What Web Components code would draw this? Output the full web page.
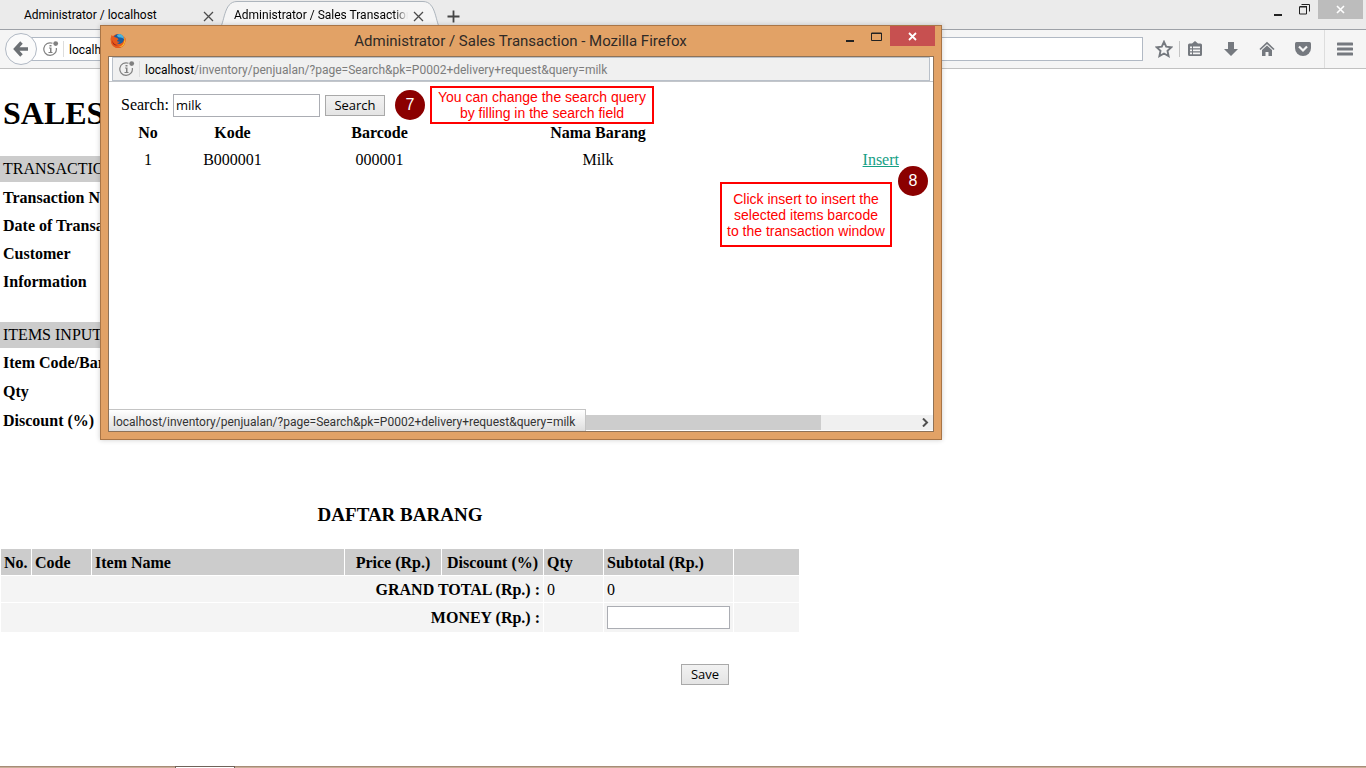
<!DOCTYPE html>
<html lang="en">
<head>
<meta charset="utf-8">
<title>Administrator / Sales Transaction</title>
<style>
  html, body { margin: 0; height: 100%; }
  body { font-family: "Liberation Serif", serif; font-size: 16px; color: #000; background: #fff; overflow: hidden; }
</style>
</head>
<body>
<app-desktop></app-desktop>

<script>
const UI = '"Open Sans", "Noto Sans", sans-serif';
const BAR = 'Roboto, "Open Sans", sans-serif';

function define(name, html, setup) {
  const template = document.createElement('template');
  template.innerHTML = html;
  customElements.define(name, class extends HTMLElement {
    constructor() {
      super();
      this.attachShadow({ mode: 'open' }).append(template.content.cloneNode(true));
    }
    connectedCallback() { if (setup) setup(this); }
  });
}

/* Page identity icon: a ringed "i" with a notification dot */
define('site-info', `
<style>
  :host { display: block; flex: none; width: 16px; height: 18px; }
  svg { display: block; }
</style>
<svg width="16" height="18" viewBox="0 0 16 18" fill="none" aria-hidden="true">
  <path d="M9.500 3.300A6.300 6.300 0 1 0 13.300 8" stroke="#808080" stroke-width="1.200"/>
  <path d="M6 8h1.500V12.500M5.500 12.500h4M8 7.500v5" stroke="#808080"/>
  <path d="M6.500 5h2v1.500h-2z" fill="#808080"/>
  <circle cx="12.700" cy="3.600" r="2.400" fill="#808080"/>
</svg>`);

define('browser-tab', `
<style>
  :host { display: block; position: relative; flex: none; width: 210px; height: 30px; font: 12px/30px ${BAR}; }
  .shape { display: none; position: absolute; left: -1px; top: 0; }
  :host([active]) .shape { display: block; }
  .row { position: relative; display: flex; align-items: center; height: 100%; padding: 0 5px 0 14px; gap: 4px; }
  .name { flex: 1; min-width: 0; overflow: hidden; white-space: nowrap; line-height: 32px; }
  :host([active]) .name { -webkit-mask-image: linear-gradient(90deg, #000 92%, transparent 100%); mask-image: linear-gradient(90deg, #000 92%, transparent 100%); }
  button { flex: none; width: 13px; height: 16px; margin: 2px 0 0; padding: 0; border: 0; background: none; display: grid; place-items: center; }
</style>
<svg class="shape" width="222" height="30" viewBox="0 0 222 30" aria-hidden="true">
  <path d="M0 29.500C6 24 4 1.500 18 1.500H204C218 1.500 216 24 222 29.500V30H0Z" fill="#f5f5f5"/>
  <path d="M0 29.500C6 24 4 1.500 18 1.500H204C218 1.500 216 24 222 29.500" fill="none" stroke="#adb5bd"/>
</svg>
<div class="row">
  <span class="name"><slot></slot></span>
  <button aria-label="Close tab"><svg width="11" height="11" viewBox="0 0 11 11"><path d="M1 1l9 9M10 1l-9 9" stroke="#4c4c4c" stroke-width="1.300"/></svg></button>
</div>`);

define('browser-chrome', `
<style>
  :host { display: block; flex: none; font: 12px/16px ${BAR}; }
  button { border: 0; padding: 0; background: none; display: grid; place-items: center; }
  .strip { display: flex; height: 29px; background: #ebebeb; border-bottom: 1px solid #9da1a7; padding-left: 10px; }
  .new { width: 24px; height: 29px; margin-left: 11px; padding-top: 3px; }
  .controls { display: flex; margin-left: auto; padding-right: 3px; }
  .controls button { width: 27px; height: 19px; }
  .controls .close { width: 45px; background: #bcbcbc; }
  .bar { display: flex; align-items: center; height: 38px; padding: 0 5px; background: #f5f5f5; border-bottom: 1px solid #c1c1c1; }
  .back { position: relative; z-index: 1; flex: none; width: 32px; height: 32px; box-sizing: border-box; border: 1px solid #b1b9c4; border-radius: 50%; background: #fbfbfb; }
  .url { flex: 1; min-width: 0; display: flex; align-items: center; height: 24px; box-sizing: border-box; border: 1px solid #b1b9c4; background: #fff; margin-left: -6px; padding-left: 11px; }
  .url i { width: 1px; height: 16px; background: #ddd; margin: 0 5px 0 4px; }
  .url input { flex: 1; min-width: 0; height: 22px; box-sizing: border-box; border: 0; padding: 2px 0 0; background: none; font: inherit; color: #000; }
  .icon { flex: none; width: 30px; height: 30px; margin-right: 6px; }
  .star { margin: 0 0 0 6px; }
  .sep { flex: none; width: 1px; height: 16px; background: #c4c4c4; }
  .tall { height: 38px; background: #ddd; margin-right: 5px; }
  .menu { margin: 0 1px 0 0; }
</style>
<div class="strip">
  <browser-tab>Administrator / localhost</browser-tab>
  <browser-tab active>Administrator / Sales Transaction</browser-tab>
  <button class="new" aria-label="New tab"><svg width="13" height="13" viewBox="0 0 13 13"><path d="M6.500 0.500v12M0.500 6.500h12" stroke="#454545" stroke-width="1.800"/></svg></button>
  <div class="controls">
    <button aria-label="Minimize"><svg width="11" height="14" viewBox="0 0 11 14"><path d="M2 11h8v2H2z" fill="#222"/></svg></button>
    <button aria-label="Restore"><svg width="11" height="11" viewBox="0 0 11 11" fill="none" stroke="#222"><path d="M2.500 0.500h8v7"/><path d="M0.500 3h7v7h-7zM0.500 2.500h7.500"/></svg></button>
    <button class="close" aria-label="Close"><svg width="9" height="9" viewBox="0 0 9 9"><path d="M1 1l7 7M8 1l-7 7" stroke="#fff" stroke-width="1.600"/></svg></button>
  </div>
</div>
<div class="bar">
  <button class="back" aria-label="Back"><svg width="16" height="16" viewBox="0 0 16 16" fill="none" stroke="#6c7074" stroke-width="3.400"><path d="M8.500 1.500L2.500 8l6 6.500M3 8h12"/></svg></button>
  <div class="url"><site-info></site-info><i></i><input aria-label="Address" value="localhost/inventory/penjualan/"></div>
  <button class="icon star" aria-label="Bookmark"><svg width="18" height="18" viewBox="0 0 18 18"><path d="M9 1.800l2.200 4.900 5.200.6-3.900 3.600 1.100 5.200L9 13.500l-4.600 2.600 1.100-5.200L1.600 7.300l5.200-.6z" fill="none" stroke="#75797f" stroke-width="1.900"/></svg></button>
  <i class="sep"></i>
  <button class="icon" aria-label="Bookmarks list"><svg width="16" height="16" viewBox="0 0 16 16" fill="#75797f"><path d="M5 2.500 8 0l3 2.500h2.500Q15 2.500 15 4v9.500q0 1.500-1.500 1.500h-11Q1 15 1 13.500V4q0-1.500 1.500-1.500z"/><path d="M3 5.500h2v1.800H3zM6 5.500h7v1.800H6zM3 8.500h2v1.800H3zM6 8.500h7v1.800H6zM3 11.500h2v1.800H3zM6 11.500h7v1.800H6z" fill="#f5f5f5"/></svg></button>
  <button class="icon" aria-label="Downloads"><svg width="16" height="16" viewBox="0 0 16 16"><path d="M5 1h6v7h4l-7 7-7-7h4z" fill="#75797f"/></svg></button>
  <button class="icon" aria-label="Home"><svg width="16" height="16" viewBox="0 0 16 16"><path d="M1 8.500L8 2l7 6.500" fill="none" stroke="#75797f" stroke-width="1.700"/><path d="M3 9l5-4.600L13 9v6H9.500v-4h-3v4H3z" fill="#75797f"/></svg></button>
  <button class="icon" aria-label="Pocket"><svg width="16" height="16" viewBox="0 0 16 16"><path d="M1.500 1h13Q16 1 16 2.500V7a8 8 0 0 1-16 0V2.500Q0 1 1.500 1z" fill="#75797f"/><path d="M4 5.500l4 4 4-4" fill="none" stroke="#f5f5f5" stroke-width="2.200"/></svg></button>
  <i class="sep tall"></i>
  <button class="icon menu" aria-label="Menu"><svg width="16" height="14" viewBox="0 0 16 14"><path d="M1 2h14M1 7h14M1 12h14" stroke="#75797f" stroke-width="3" stroke-linecap="round"/></svg></button>
</div>`);

/* One titled group of form fields */
define('field-group', `
<style>
  :host { display: block; }
  h2 { margin: 0; padding: 0 3px; font-size: 16px; font-weight: normal; line-height: 26px; background: #ccc; }
  .rows { padding: 2px 3px; display: grid; grid-template-columns: 180px 180px; grid-auto-rows: 28px; align-items: center; }
  :host([roomy]) .rows { padding: 0 3px; grid-auto-rows: 29px; }
  label { font-weight: bold; white-space: nowrap; }
  input { box-sizing: border-box; width: 180px; height: 22px; border: 1px solid #abadb3; }
</style>
<h2></h2>
<div class="rows"></div>`, (el) => {
  const root = el.shadowRoot;
  root.querySelector('h2').textContent = el.getAttribute('heading');
  const rows = root.querySelector('.rows');
  el.getAttribute('fields').split('|').forEach((text, i) => {
    const label = document.createElement('label');
    const input = document.createElement('input');
    label.textContent = text;
    label.htmlFor = input.id = 'field' + i;
    rows.append(label, input);
  });
});

define('sales-page', `
<style>
  :host { display: block; flex: 1; min-height: 0; }
  main { max-width: 800px; }
  h1 { margin: 0; padding: 26px 3px 24px; font-size: 32px; line-height: 37px; }
  field-group + field-group { margin-top: 24px; }
  h3 { margin: 69px 0 22px; font-size: 19px; line-height: 22px; text-align: center; }
  table { width: 100%; table-layout: fixed; border-spacing: 1px; }
  th, td { box-sizing: border-box; padding: 2px 3px 0; height: 26px; text-align: left; white-space: nowrap; background: #f4f4f4; }
  thead th { background: #ccc; }
  thead .mid { text-align: center; }
  tbody th { text-align: right; }
  .money > * { height: 29px; padding-top: 0; }
  input { display: block; box-sizing: border-box; width: 100%; height: 23px; padding: 0 3px; border: 1px solid #abadb3; background: #fff; font: 13px ${UI}; }
  .actions { display: flex; justify-content: flex-end; padding: 31px 71px 0 0; }
  button { width: 48px; height: 21px; padding: 0; border: 1px solid #a9a9a9; background: linear-gradient(#f2f2f2, #e4e4e4); font: 13px/19px ${UI}; color: #000; }
</style>
<main>
  <h1>SALES</h1>
  <field-group heading="TRANSACTION" fields="Transaction No.|Date of Transaction|Customer|Information"></field-group>
  <field-group roomy heading="ITEMS INPUT" fields="Item Code/Barcode|Qty|Discount (%)"></field-group>
  <h3>DAFTAR BARANG</h3>
  <table>
    <colgroup><col style="width:30px"><col style="width:59px"><col><col style="width:96px"><col style="width:101px"><col style="width:59px"><col style="width:129px"><col style="width:65px"></colgroup>
    <thead><tr><th>No.</th><th>Code</th><th>Item Name</th><th class="mid">Price (Rp.)</th><th class="mid">Discount (%)</th><th>Qty</th><th>Subtotal (Rp.)</th><th></th></tr></thead>
    <tbody>
      <tr><th colspan="5">GRAND TOTAL (Rp.) :</th><td>0</td><td>0</td><td></td></tr>
      <tr class="money"><th colspan="5"><label for="money">MONEY (Rp.) :</label></th><td></td><td><input id="money"></td><td></td></tr>
    </tbody>
  </table>
  <div class="actions"><button>Save</button></div>
</main>`);

define('step-badge', `
<style>
  :host { display: grid; place-items: center; flex: none; width: 30px; height: 30px; border-radius: 50%; background: #8b0000; color: #fff; font: 16px/30px "Liberation Sans", sans-serif; }
</style><slot></slot>`);

define('call-out', `
<style>
  :host { display: grid; place-items: center; align-content: center; flex: none; box-sizing: border-box; border: 2px solid #f00; background: #fff; color: #f00; font: 14px/16px "Liberation Sans", sans-serif; text-align: center; white-space: nowrap; }
</style><span><slot></slot></span>`);

define('popup-window', `
<style>
  :host { display: flex; flex-direction: column; box-sizing: border-box; padding: 0 7px 7px; border: 1px solid #a97546; background: #e2a266; box-shadow: 0 0 5px rgba(0,0,0,.2); }
  header { display: flex; height: 30px; flex: none; margin-right: -1px; }
  header button { border: 0; padding: 0; background: none; width: 27px; height: 20px; display: grid; place-items: center; }
  header .close { width: 45px; background: #c75050; }
  .fox { flex: none; margin: 6px 0 0 1px; }
  .title { flex: 1; padding-left: 78px; text-align: center; font: 15px/30px ${BAR}; color: #2f2a26; white-space: nowrap; }
  .frame { position: relative; flex: 1; display: flex; flex-direction: column; border: 1px solid #8f7257; background: #fff; }
  .url { display: flex; align-items: center; flex: none; height: 24px; margin: 0 3px; box-sizing: border-box; border: 1px solid #b9c0c9; padding-left: 6px; background: #f0f0f0; font: 12px/24px ${BAR}; color: #7c7c7c; white-space: nowrap; }
  .url span { padding-top: 2px; }
  .url i { width: 1px; height: 16px; background: #ddd; margin: 0 5px 0 4px; }
  .url b { font-weight: normal; color: #000; }
  .line { flex: none; height: 1px; background: #c3c6ca; }
  .body { position: relative; flex: 1; padding: 4px 12px 0; }
  .top { display: flex; align-items: center; height: 38px; }
  form { display: flex; align-items: center; margin-right: 10px; }
  input { box-sizing: border-box; width: 147px; height: 23px; margin: 0 5px 0 4px; padding: 0 2px; border: 1px solid #abadb3; font: 13px ${UI}; color: #000; }
  form button { width: 60px; height: 21px; padding: 0; border: 1px solid #a9a9a9; background: linear-gradient(#f2f2f2, #e4e4e4); font: 13px/19px ${UI}; color: #000; }
  .hint { width: 224px; height: 38px; margin-left: 5px; }
  table { table-layout: fixed; width: 778px; border-collapse: collapse; }
  th, td { padding: 0; text-align: center; }
  th { height: 18px; } td { height: 36px; }
  td:last-child { text-align: right; }
  a { color: #16a085; }
  .eight { position: absolute; left: 789px; top: 84px; }
  .note { position: absolute; left: 611px; top: 100px; width: 172px; height: 65px; }
  .scroll { display: flex; flex: none; height: 15px; margin-bottom: 1px; background: #f0f0f0; }
  .scroll i { width: 712px; background: #cdcdcd; }
  .scroll svg { margin: 3px 3px 0 auto; }
  .status { position: absolute; left: 0; bottom: 0; box-sizing: border-box; width: 477px; height: 22px; padding-left: 4px; border: solid #c4c4c4; border-width: 1px 1px 0 0; background: linear-gradient(#fff, #dedede); font: 12px/24px ${BAR}; color: #333; white-space: nowrap; }
</style>
<header>
  <svg class="fox" width="18" height="18" viewBox="0 0 18 18" aria-hidden="true">
    <circle cx="9" cy="9" r="7" fill="#e0501b"/>
    <circle cx="9.500" cy="7.500" r="5.400" fill="#1c5c9e"/>
    <path d="M8 3q3-2 5 0 2 1.500 2 4-2-2-4-1.500Q8 5 8 3z" fill="#49b3dc"/>
    <path d="M2.500 3q-1.500 3.500-.5 7 2 6 7.500 6t7-6.500q.6-3-1-5 .3 4-2 6-3 2.500-5.500.5 2 0 3-1.500-2 .5-3-.5 0-1 1.500-1.500-.5-1.500-2.500-2Q4 4.500 2.500 3z" fill="#e65a1c"/>
    <path d="M15.500 5q1 2 .6 4.500Q15 15.500 9.500 15q4.500-1 5.500-5 .8-2.500.5-5z" fill="#fcc52c"/>
    <path d="M3 8q1.500 5 6 5-5.500 1.800-6-5z" fill="#a02318"/>
  </svg>
  <span class="title">Administrator / Sales Transaction - Mozilla Firefox</span>
  <button aria-label="Minimize"><svg width="9" height="14" viewBox="0 0 9 14"><path d="M1 11h8v2H1z" fill="#222"/></svg></button>
  <button aria-label="Maximize"><svg width="11" height="9" viewBox="0 0 11 9"><path d="M.5 1h10v7.500H.5zM.5 1.500h10" fill="none" stroke="#222"/></svg></button>
  <button class="close" aria-label="Close"><svg width="9" height="9" viewBox="0 0 9 9"><path d="M1 1l7 7M8 1l-7 7" stroke="#fff" stroke-width="1.800"/></svg></button>
</header>
<div class="frame">
  <div class="url"><site-info></site-info><i></i><span><b>localhost</b>/inventory/penjualan/?page=Search&amp;pk=P0002+delivery+request&amp;query=milk</span></div>
  <div class="line"></div>
  <div class="body">
    <div class="top">
      <form onsubmit="return false"><label for="q">Search:</label><input id="q" value="milk"><button>Search</button></form>
      <step-badge>7</step-badge>
      <call-out class="hint">You can change the search query<br>by filling in the search field</call-out>
    </div>
    <table>
      <colgroup><col style="width:54px"><col style="width:115px"><col style="width:179px"><col style="width:258px"><col></colgroup>
      <thead><tr><th>No</th><th>Kode</th><th>Barcode</th><th>Nama Barang</th><th></th></tr></thead>
      <tbody><tr><td>1</td><td>B000001</td><td>000001</td><td>Milk</td><td><a href="#">Insert</a></td></tr></tbody>
    </table>
    <step-badge class="eight">8</step-badge>
    <call-out class="note">Click insert to insert the<br>selected items barcode<br>to the transaction window</call-out>
  </div>
  <div class="scroll"><i></i><svg width="10" height="9" viewBox="0 0 10 9"><path d="M3 .5l4 4-4 4" fill="none" stroke="#505050" stroke-width="2"/></svg></div>
  <div class="status">localhost/inventory/penjualan/?page=Search&amp;pk=P0002+delivery+request&amp;query=milk</div>
</div>`);

define('app-desktop', `
<style>
  :host { display: flex; flex-direction: column; position: relative; height: 100vh; overflow: hidden; }
  popup-window { position: absolute; left: 100px; top: 25px; width: 842px; height: 415px; }
  footer { display: flex; flex: none; height: 1px; border-top: 1px solid #a78c77; background: #c9ae98; }
  footer i { width: 60px; height: 2px; margin: -1px 0 0 175px; box-sizing: border-box; border: solid #6f6259; border-width: 1px 1px 0; background: #fff; }
</style>
<browser-chrome></browser-chrome>
<sales-page></sales-page>
<footer><i></i></footer>
<popup-window></popup-window>`);
</script>
</body>
</html>
